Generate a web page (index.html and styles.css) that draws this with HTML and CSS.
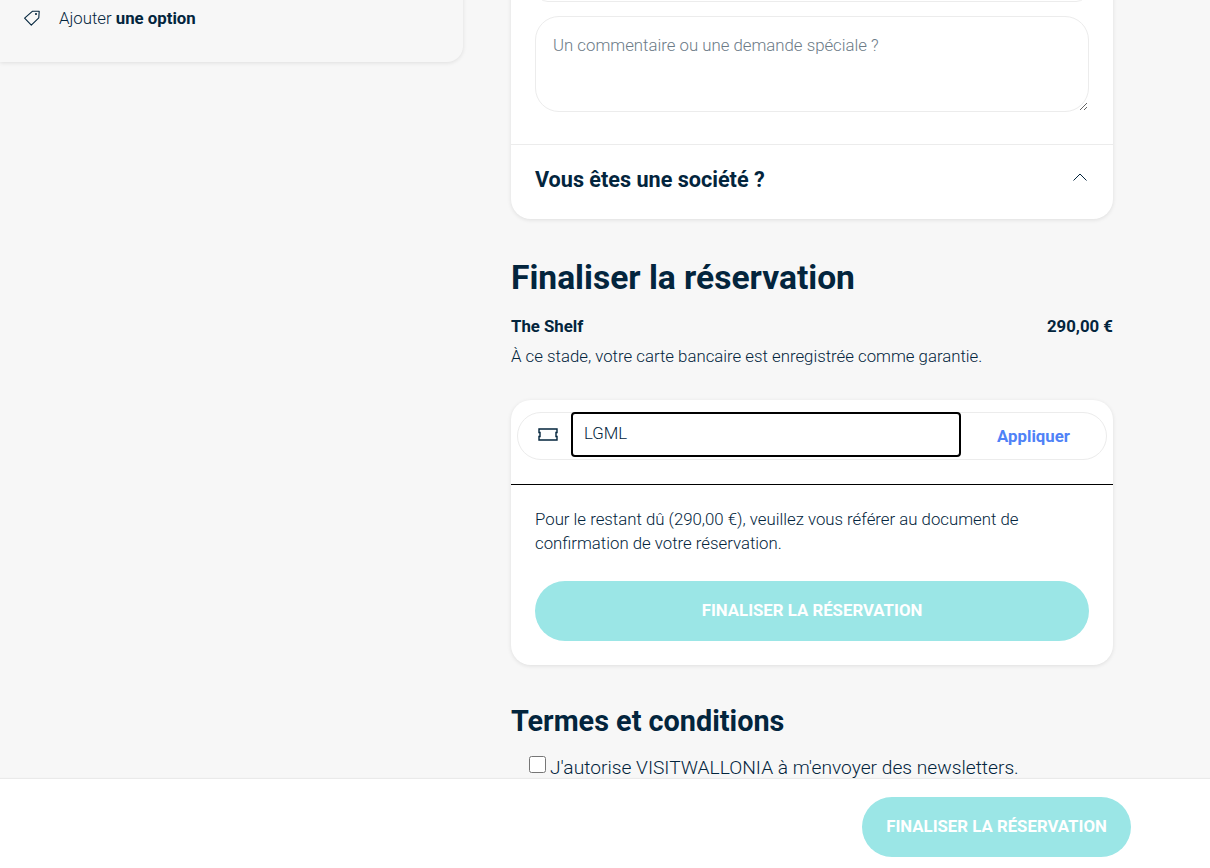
FILE: index.html
```html
<!DOCTYPE html>
<html lang="fr">
<head>
<meta charset="utf-8">
<title>Finaliser la réservation</title>
<link rel="stylesheet" href="styles.css">
</head>
<body>
<div class="page">
  <aside class="side">
    <div class="option-card">
      <svg class="tag-icon" width="18" height="18" viewBox="0 0 18 18" fill="none" stroke="#03253d" stroke-width="1.1" stroke-linejoin="round"><path d="M1.6 9.2 9.6 2.2 16.2 2.2 15.8 8.8 8.3 16.2Z"/><circle cx="13" cy="5" r=".5"/></svg>
      <span class="option-text">Ajouter <strong>une option</strong></span>
    </div>
  </aside>
  <main class="main">
    <section class="card top-card">
      <div class="field-clip"><div class="prev-input"></div></div>
      <div class="comment-wrap">
        <textarea class="comment" placeholder="Un commentaire ou une demande spéciale ?"></textarea>
      </div>
      <div class="company">
        <h3 class="company-title">Vous êtes une société ?</h3>
        <svg class="chevron" width="16" height="10" viewBox="0 0 16 10" fill="none" stroke="#03253d" stroke-width="1"><path d="M1.5 8.5 8 2l6.5 6.5"/></svg>
      </div>
    </section>

    <h1 class="section-title">Finaliser la réservation</h1>
    <div class="price-row"><span>The Shelf</span><span>290,00 €</span></div>
    <p class="guarantee">À ce stade, votre carte bancaire est enregistrée comme garantie.</p>

    <section class="card pay-card">
      <div class="voucher-zone">
        <div class="voucher">
          <span class="ticket">
            <svg width="20" height="13" viewBox="0 0 20 13" fill="none" stroke="#03253d" stroke-width="1.4" stroke-linejoin="miter"><path d="M1 1h18v3.5h-1v4h1V12H1V8.5h1v-4H1z"/></svg>
          </span>
          <input class="code" type="text" value="LGML">
          <span class="apply">Appliquer</span>
        </div>
      </div>
      <div class="pay-body">
        <p class="remaining">Pour le restant dû (290,00 €), veuillez vous référer au document de confirmation de votre réservation.</p>
        <button class="cta cta-wide" type="button">FINALISER LA RÉSERVATION</button>
      </div>
    </section>

    <h2 class="terms-title">Termes et conditions</h2>
    <label class="terms-row"><input class="check" type="checkbox"><span>J'autorise VISITWALLONIA à m'envoyer des newsletters.</span></label>
  </main>
</div>
<footer class="footer">
  <button class="cta cta-foot" type="button">FINALISER LA RÉSERVATION</button>
</footer>
</body>
</html>
```
FILE: styles.css
```css
* { box-sizing: border-box; }
html, body { margin: 0; height: 100%; overflow: hidden; }
body {
  background: #f7f7f7;
  color: #03253d;
  font-family: Roboto, "Liberation Sans", sans-serif;
  font-size: 16.8px;
}
.page {
  display: grid;
  grid-template-columns: 463px 602px;
  column-gap: 48px;
  align-items: start;
}
.option-card {
  display: flex;
  align-items: center;
  gap: 18px;
  height: 100px;
  margin-top: -38px;
  padding: 11px 0 0 23px;
  background: #f7f7f7;
  border-radius: 0 0 16px 0;
  box-shadow: 0 1px 4px rgba(0, 0, 0, .1);
}
.option-text { font-weight: 300; line-height: 24px; }
.option-text strong { font-weight: 700; }
.tag-icon { flex: none; }
.main { display: flex; flex-direction: column; }
.card {
  background: #fff;
  border-radius: 20px;
  box-shadow: 0 1px 4px rgba(0, 0, 0, .1);
}
.top-card { margin-top: -24px; height: 243px; }
.field-clip { height: 26px; padding: 0 24px; overflow: hidden; }
.prev-input {
  height: 26px;
  border: 1px solid #ececec;
  border-radius: 20px;
}
.comment-wrap { padding: 14px 24px 0; }
.comment {
  display: block;
  width: 100%;
  height: 96px;
  padding: 16px 17px;
  border: 1px solid #ececec;
  border-radius: 24px;
  outline: 0;
  font: 300 16.8px/24px Roboto, sans-serif;
  color: #03253d;
  background: #fff;
}
.comment::placeholder { color: #6c7b87; opacity: 1; }
.company {
  display: flex;
  align-items: center;
  justify-content: space-between;
  height: 76px;
  margin-top: 32px;
  padding: 0 25px 6px 24px;
  border-top: 1px solid #ececec;
}
.company-title { margin: 0; font-size: 21.6px; font-weight: 700; line-height: 28px; }
.chevron { margin-top: -6px; }
.section-title { margin: 39px 0 0; font-size: 33.6px; font-weight: 700; line-height: 40px; }
.price-row {
  display: flex;
  justify-content: space-between;
  margin-top: 18px;
  font-weight: 700;
  line-height: 20px;
}
.guarantee { margin: 10px 0 0; font-weight: 300; line-height: 20px; }
.pay-card { margin-top: 34px; height: 265px; }
.voucher-zone { height: 85px; padding: 12px 6px 0; border-bottom: 1px solid #000; }
.voucher {
  display: flex;
  align-items: flex-start;
  height: 48px;
  border: 1px solid #ececec;
  border-radius: 24px;
}
.ticket { display: flex; align-items: center; justify-content: center; align-self: stretch; width: 53px; padding: 0 0 4px 7px; flex: none; }
.code {
  width: 390px;
  height: 45px;
  flex: none;
  margin: -1px 0 0;
  padding: 0 11px 4px;
  border: 2px solid #000;
  border-radius: 4px;
  outline: 0;
  font: 300 16.8px Roboto, sans-serif;
  color: #03253d;
  background: #fff;
}
.apply {
  flex: 1;
  align-self: stretch;
  display: flex;
  align-items: center;
  justify-content: center;
  color: #4f82f7;
  font-weight: 700;
}
.pay-body { padding: 22px 24px 0; }
.remaining { margin: 0; font-weight: 300; line-height: 24px; }
.cta {
  display: block;
  height: 60px;
  border: 0;
  border-radius: 30px;
  background: #9be6e6;
  color: #fff;
  font: 700 16.8px Roboto, sans-serif;
}
.cta-wide { width: 100%; margin-top: 26px; padding-bottom: 4px; }
.terms-title { margin: 38px 0 0; font-size: 28.8px; font-weight: 700; line-height: 36px; }
.terms-row {
  display: flex;
  align-items: flex-start;
  margin: 15px 0 0 18px;
  font-size: 19.2px;
  font-weight: 300;
  line-height: 28px;
}
.check { width: 17px; height: 17px; margin: 2px 4px 0 0; flex: none; }
.footer {
  position: fixed;
  left: 0;
  right: 0;
  bottom: 0;
  height: 89px;
  display: flex;
  justify-content: flex-end;
  padding: 18px 79px 0 0;
  background: #fff;
  box-shadow: 0 -1px 1px rgba(0, 0, 0, .05);
}
.cta-foot { width: 269px; padding-bottom: 4px; }
```
